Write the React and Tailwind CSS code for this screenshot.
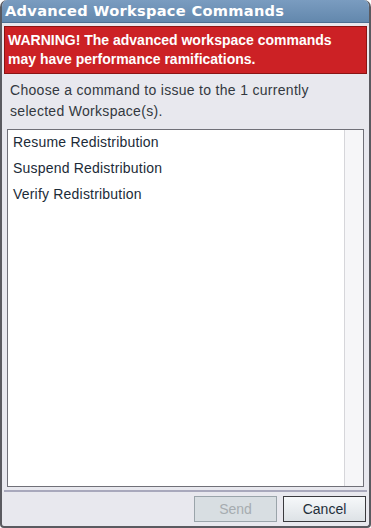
import React from 'react';

const COMMANDS = ['Resume Redistribution', 'Suspend Redistribution', 'Verify Redistribution'];

const App = () => {
  return (
    <div className="h-[528px] w-[371px] bg-white">
      <div className="flex h-[528px] w-[371px] flex-col overflow-hidden rounded-t-[7px] rounded-bl-[4px] rounded-br-[4px] border-x-2 border-b-2 border-[#5a5a60] bg-[#e8e8ee] font-['Liberation_Sans',Arial,sans-serif]">
        <div className="flex h-[23px] shrink-0 items-center border-b border-[#4d6f92] bg-gradient-to-b from-[#7a9cc0] to-[#6388ad] px-[3px]">
          <span className="font-['DejaVu_Sans',sans-serif] text-[14.6px] font-bold tracking-[0.3px] text-white">
            Advanced Workspace Commands
          </span>
        </div>

        <div className="flex flex-1 flex-col px-[2px] pt-[3px]">
          <div className="h-[48px] border border-[#8a1414] bg-[#cc2125] px-[3px] pt-[4px] text-[14px] font-bold leading-[19px] text-white">
            WARNING! The advanced workspace commands
            <br />
            may have performance ramifications.
          </div>

          <p className="mt-[6px] px-[6px] text-[14px] leading-[21px] tracking-[0.3px] text-[#333840]">
            Choose a command to issue to the 1 currently
            <br />
            selected Workspace(s).
          </p>

          <div className="mx-[3px] mt-[7px] flex h-[358px] border border-[#707078] bg-white">
            <ul className="flex-1 pt-[1px]">
              {COMMANDS.map((cmd) => (
                <li key={cmd} className="h-[26px] px-[5px] text-[14px] leading-[23px] tracking-[0.2px] text-[#1c2b38]">
                  {cmd}
                </li>
              ))}
            </ul>
            <div className="w-[19px] border-l border-[#d6d6da] bg-[#f6f6f8]" />
          </div>

          <div className="mt-[3px] border-t-2 border-[#a8a8bc]" />

          <div className="flex justify-end gap-[6px] pr-[1px] pt-[4px]">
            <button className="h-[26px] w-[83px] border border-[#9aa4aa] bg-[#d8dee2] text-[14px] text-[#a6acb0]">
              Send
            </button>
            <button className="h-[26px] w-[83px] border border-[#3a3a3e] bg-gradient-to-b from-[#f6f8fa] to-[#dde2e6] text-[14px] text-[#1f2e3a]">
              Cancel
            </button>
          </div>
        </div>
      </div>
    </div>
  );
};

export default App;
